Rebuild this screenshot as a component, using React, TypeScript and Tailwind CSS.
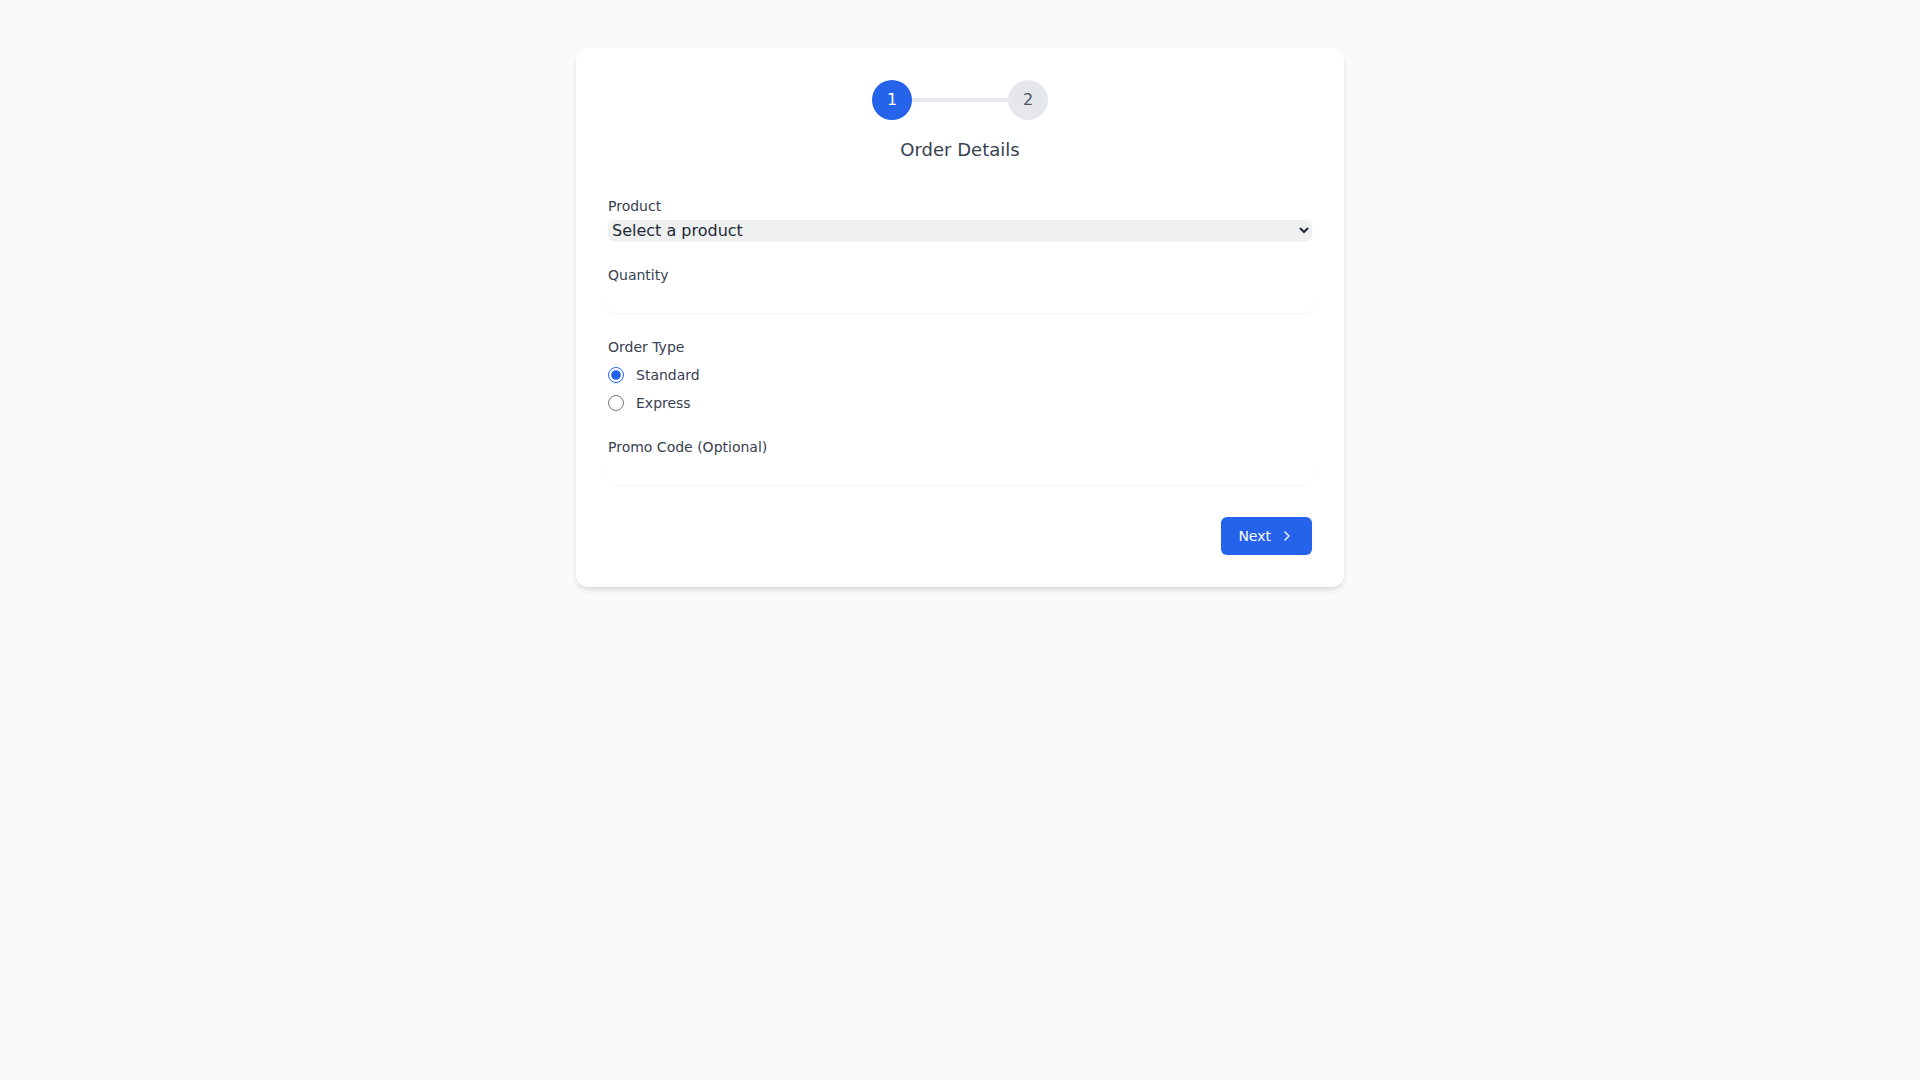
import React, { useState } from "react";

export default function App() {
  const [orderType, setOrderType] = useState("standard");
  return (
    <div className="min-h-screen bg-[#f9fafb] py-12 font-['DejaVu_Sans',sans-serif]">
      <div className="mx-auto max-w-3xl rounded-xl bg-white p-8 shadow-[0_4px_6px_-1px_rgba(0,0,0,0.1),0_2px_4px_-2px_rgba(0,0,0,0.1)]">
        <div className="flex items-center justify-center">
          <div className="flex h-10 w-10 items-center justify-center rounded-full bg-[#2563eb] text-white">1</div>
          <div className="h-1 w-24 bg-[#e5e7eb]"></div>
          <div className="flex h-10 w-10 items-center justify-center rounded-full bg-[#e5e7eb] text-[#4b5563]">2</div>
        </div>
        <h2 className="mt-4 mb-8 text-center text-lg text-[#374151]">Order Details</h2>
        <form className="space-y-6" onSubmit={(e) => e.preventDefault()}>
          <div>
            <label className="mb-1 block text-sm text-[#374151]">Product</label>
            <select className="block w-full rounded-md bg-[#eff0f0] text-base text-[#1f2937] shadow-[0_1px_2px_0_rgba(0,0,0,0.05)]">
              <option>Select a product</option>
            </select>
          </div>
          <div>
            <label className="mb-1 block text-sm text-[#374151]">Quantity</label>
            <input type="number" className="block h-6 w-full rounded-md shadow-[0_1px_2px_0_rgba(0,0,0,0.05)]" />
          </div>
          <div>
            <label className="mb-2 block text-sm text-[#374151]">Order Type</label>
            <div className="space-y-2">
              <label className="flex h-5 items-center text-sm text-[#374151]">
                <input
                  type="radio"
                  name="ot"
                  checked={orderType === "standard"}
                  onChange={() => setOrderType("standard")}
                  className="m-0 h-4 w-4 accent-[#2563eb]"
                />
                <span className="ml-3">Standard</span>
              </label>
              <label className="flex h-5 items-center text-sm text-[#374151]">
                <input
                  type="radio"
                  name="ot"
                  checked={orderType === "express"}
                  onChange={() => setOrderType("express")}
                  className="m-0 h-4 w-4 accent-[#2563eb]"
                />
                <span className="ml-3">Express</span>
              </label>
            </div>
          </div>
          <div>
            <label className="mb-1 block text-sm text-[#374151]">Promo Code (Optional)</label>
            <input type="text" className="block h-6 w-full rounded-md shadow-[0_1px_2px_0_rgba(0,0,0,0.05)]" />
          </div>
          <div className="flex justify-end pt-2">
            <button
              type="submit"
              className="inline-flex items-center rounded-md border border-transparent bg-[#2563eb] px-4 py-2 text-sm text-white shadow-[0_1px_2px_0_rgba(0,0,0,0.05)]"
            >
              Next
              <svg className="ml-2 h-4 w-4" viewBox="0 0 24 24" fill="none" stroke="currentColor" strokeWidth="2" strokeLinecap="round" strokeLinejoin="round">
                <path d="m9 18 6-6-6-6" />
              </svg>
            </button>
          </div>
        </form>
      </div>
    </div>
  );
}
